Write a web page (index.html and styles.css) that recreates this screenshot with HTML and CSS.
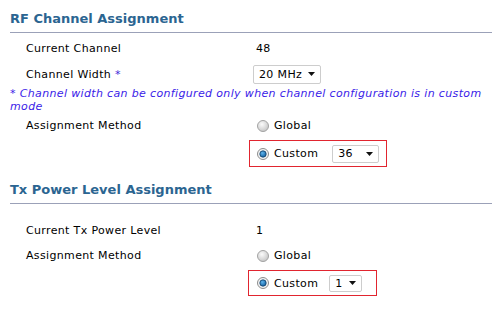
FILE: index.html
```html
<!DOCTYPE html>
<html lang="en">
<head>
    <meta charset="UTF-8">
    <meta name="viewport" content="width=device-width, initial-scale=1.0">
    <title>RF Channel Assignment</title>
    <link rel="stylesheet" href="styles.css">
</head>
<body>
    <div class="panel">
        <h2 class="section-title">RF Channel Assignment</h2>
        <div class="rows rows-first">
            <div class="row">
                <span class="label">Current Channel</span>
                <span class="value">48</span>
            </div>
            <div class="row">
                <span class="label">Channel Width <span class="req">*</span></span>
                <span class="select select-width">
                    <span>20 MHz</span>
                    <svg class="arrow" width="7" height="4" viewBox="0 0 7 4"><path d="M0 0h7L3.5 4z"/></svg>
                </span>
            </div>
        </div>
        <p class="note">* Channel width can be configured only when channel configuration is in custom mode</p>
        <div class="row row-short">
            <span class="label">Assignment Method</span>
            <span class="option">
                <svg class="radio" width="12" height="12" viewBox="0 0 12 12"><circle cx="6" cy="6" r="5.5" fill="url(#off)" stroke="#a3a3a3"/></svg>
                Global
            </span>
        </div>
        <div class="row row-box">
            <span class="label"></span>
            <span class="custom-box box-channel">
                <span class="option">
                    <svg class="radio" width="12" height="12" viewBox="0 0 12 12"><circle cx="6" cy="6" r="5.5" fill="#f4f4f4" stroke="#8c8c8c"/><circle cx="6" cy="6" r="3.2" fill="url(#on)" stroke="#123f66" stroke-width="0.8"/></svg>
                    Custom
                </span>
                <span class="select select-channel">
                    <span>36</span>
                    <svg class="arrow" width="7" height="4" viewBox="0 0 7 4"><path d="M0 0h7L3.5 4z"/></svg>
                </span>
            </span>
        </div>

        <h2 class="section-title section-second">Tx Power Level Assignment</h2>
        <div class="rows rows-second">
            <div class="row">
                <span class="label">Current Tx Power Level</span>
                <span class="value">1</span>
            </div>
            <div class="row row-short">
                <span class="label">Assignment Method</span>
                <span class="option">
                    <svg class="radio" width="12" height="12" viewBox="0 0 12 12"><circle cx="6" cy="6" r="5.5" fill="url(#off)" stroke="#a3a3a3"/></svg>
                    Global
                </span>
            </div>
            <div class="row row-box">
                <span class="label"></span>
                <span class="custom-box box-power">
                    <span class="option">
                        <svg class="radio" width="12" height="12" viewBox="0 0 12 12"><circle cx="6" cy="6" r="5.5" fill="#f4f4f4" stroke="#8c8c8c"/><circle cx="6" cy="6" r="3.2" fill="url(#on)" stroke="#123f66" stroke-width="0.8"/></svg>
                        Custom
                    </span>
                    <span class="select select-power">
                        <span>1</span>
                        <svg class="arrow" width="7" height="4" viewBox="0 0 7 4"><path d="M0 0h7L3.5 4z"/></svg>
                    </span>
                </span>
            </div>
        </div>
    </div>

    <!-- gradientes compartidos de los radios -->
    <svg class="defs" width="0" height="0">
        <defs>
            <radialGradient id="off" cx="0.4" cy="0.35" r="0.7">
                <stop offset="0" stop-color="#fbfbfb"/>
                <stop offset="1" stop-color="#c4c4c4"/>
            </radialGradient>
            <radialGradient id="on" cx="0.4" cy="0.35" r="0.7">
                <stop offset="0" stop-color="#5fb4ec"/>
                <stop offset="1" stop-color="#0f5d9e"/>
            </radialGradient>
        </defs>
    </svg>
</body>
</html>
```

FILE: styles.css
```css
body {
    margin: 0;
    font-family: "DejaVu Sans", Verdana, sans-serif;
    font-size: 11px;
    letter-spacing: 0.35px;
    color: #000;
    background-color: #fff;
}
.panel {
    padding: 0 6px 0 10px;
}
.section-title {
    margin: 0;
    padding: 10px 0 4px;
    line-height: 18px;
    font-size: 13px;
    font-weight: bold;
    letter-spacing: 0;
    color: #2b6591;
    border-bottom: 1px solid #9ba1b8;
}
.section-second {
    margin-top: 4px;
}
.rows-first {
    margin-top: 2px;
}
.rows-second {
    margin-top: 13px;
}
.row {
    display: grid;
    grid-template-columns: 227px auto;
    align-items: center;
    height: 26px;
    padding-left: 16px;
}
.row-short {
    height: 25px;
}
.row-box {
    height: auto;
    margin-top: 2px;
}
.value {
    padding-left: 3px;
}
.req {
    color: #3a2bd8;
}
.note {
    margin: 0;
    line-height: 13px;
    font-style: italic;
    color: #3a22e8;
}
.option {
    display: inline-flex;
    align-items: center;
    gap: 5px;
    padding-left: 4px;
}
.radio {
    display: block;
}
.custom-box {
    display: flex;
    align-items: center;
    box-sizing: border-box;
    margin-left: -4px;
    padding-left: 3px;
    border: 1px solid #e1252f;
}
.box-channel {
    width: 138px;
    height: 27px;
}
.box-power {
    width: 129px;
    height: 26px;
    margin-left: -5px;
    padding-left: 4px;
}
.select {
    display: inline-flex;
    align-items: center;
    justify-content: space-between;
    box-sizing: border-box;
    padding: 0 5px 0 5px;
    background-color: #fff;
    border: 1px solid #cdcdcd;
    border-radius: 2px;
}
.select-width {
    width: 68px;
    height: 19px;
}
.select-channel {
    width: 47px;
    height: 18px;
    margin-left: 14px;
}
.select-power {
    width: 33px;
    height: 17px;
    margin-left: 11px;
}
.arrow {
    fill: #111;
}
.defs {
    position: absolute;
}
```
